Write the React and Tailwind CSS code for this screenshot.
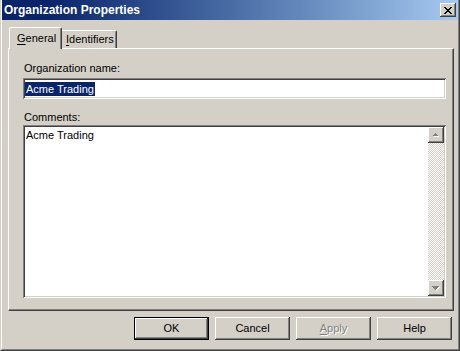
import React from 'react';

// raised 3D bevel used by buttons, tabs panel and scroll buttons
const raised = 'shadow-[inset_-1px_-1px_#404040,inset_1px_1px_#ffffff,inset_-2px_-2px_#808080,inset_2px_2px_#d4d0c8]';
const sunken = 'shadow-[inset_1px_1px_#808080,inset_-1px_-1px_#ffffff,inset_2px_2px_#404040,inset_-2px_-2px_#d4d0c8]';

const CloseGlyph = () => {
  const rows = ['11000011', '01100110', '00111100', '00011000', '00111100', '01100110', '11000011'];
  return (
    <svg width="8" height="7" viewBox="0 0 8 7" shapeRendering="crispEdges">
      {rows.map((r, y) =>
        r.split('').map((c, x) => (c === '1' ? <rect key={`${x}-${y}`} x={x} y={y} width="1" height="1" fill="#000" /> : null))
      )}
    </svg>
  );
};

const Arrow = ({ up }) => (
  <svg width="8" height="5" viewBox="0 0 8 5" shapeRendering="crispEdges">
    {up ? (
      <>
        <path d="M4 1h1v1h1v1h1v1H2V3h1V2h1z" fill="#ffffff" />
        <path d="M3 0h1v1h1v1h1v1H1V2h1V1h1z" fill="#808080" />
      </>
    ) : (
      <>
        <path d="M1 1h7v1H7v1H6v1H5v1H4V4H3V3H2V2H1z" fill="#ffffff" />
        <path d="M0 0h7v1H6v1H5v1H4v1H3V3H2V2H1V1H0z" fill="#808080" />
      </>
    )}
  </svg>
);

const Btn = ({ children, isDefault, disabled }) => (
  <button
    className={`w-[75px] h-[23px] bg-[#d4d0c8] flex items-center justify-center ${
      isDefault
        ? 'border border-black shadow-[inset_-1px_-1px_#404040,inset_1px_1px_#ffffff,inset_-2px_-2px_#808080]'
        : raised
    } ${disabled ? 'text-[#808080] [text-shadow:1px_1px_0_#ffffff]' : 'text-black'}`}
  >
    {children}
  </button>
);

export default function App() {
  return (
    <div className="w-[460px] h-[351px] bg-[#d4d0c8] font-['Liberation_Sans',Arial,sans-serif] text-[11px] leading-[13px] text-black border-l border-l-[#d4d0c8] border-r border-b border-r-[#404040] border-b-[#404040] overflow-hidden select-none">
      <div className="h-full flex flex-col border-l border-l-white border-r border-b border-r-[#808080] border-b-[#808080]">
        {/* Title bar */}
        <div className="h-[20px] shrink-0 flex items-center justify-between bg-gradient-to-r from-[#0a246a] from-10% to-[#a6caf0] pl-[2px] pr-[2px]">
          <span className="text-white font-bold text-[12px]">Organization Properties</span>
          <div className={`w-[16px] h-[14px] bg-[#d4d0c8] flex items-center justify-center ${raised}`}>
            <CloseGlyph />
          </div>
        </div>

        {/* Tabs + panel */}
        <div className="ml-[6px] mt-[7px] w-[446px] flex flex-col">
          <div className="h-[21px] flex items-end relative z-10 pl-[1px]">
            <div className="w-[53px] h-[22px] -mb-px bg-[#d4d0c8] border-l border-t border-white border-r border-r-[#404040] shadow-[inset_-1px_0_#808080] rounded-tl-[2px] rounded-tr-[2px] pl-[7px] pt-[4px]">
              <span className="underline underline-offset-2">G</span>eneral
            </div>
            <div className="w-[55px] h-[18px] bg-[#d4d0c8] border-t border-t-white border-r border-r-[#404040] shadow-[inset_-1px_0_#808080] rounded-tr-[2px] pl-[4px] pt-[2px]">
              <span className="underline underline-offset-2">I</span>dentifiers
            </div>
          </div>
          <div className="h-[263px] bg-[#d4d0c8] border-l border-t border-white border-r border-b border-r-[#404040] border-b-[#404040] shadow-[inset_-1px_-1px_#808080] pl-[14px] pt-[13px]">
            <div className="pl-[1px] h-[13px]">Organization name:</div>
            <div className={`mt-[3px] w-[423px] h-[21px] bg-white ${sunken} flex items-center pl-[2px]`}>
              <span className="bg-[#0a246a] text-white h-[14px] leading-[14px] px-[1px]">Acme Trading</span>
            </div>
            <div className="mt-[12px] pl-[1px] h-[13px]">Comments:</div>
            <div className={`mt-[1px] w-[423px] h-[173px] bg-white ${sunken} flex p-[2px]`}>
              <div className="flex-1 pl-[1px] pt-[2px]">Acme Trading</div>
              <div className="w-[16px] flex flex-col bg-[repeating-conic-gradient(#ffffff_0_25%,#d4d0c8_0_50%)] bg-[length:2px_2px]">
                <div className={`h-[16px] bg-[#d4d0c8] flex items-center justify-center ${raised}`}>
                  <Arrow up />
                </div>
                <div className="flex-1" />
                <div className={`h-[16px] bg-[#d4d0c8] flex items-center justify-center ${raised}`}>
                  <Arrow />
                </div>
              </div>
            </div>
          </div>
        </div>

        {/* Buttons */}
        <div className="mt-[6px] flex justify-end gap-[6px] pr-[6px]">
          <Btn isDefault>OK</Btn>
          <Btn>Cancel</Btn>
          <Btn disabled>
            <span><span className="underline underline-offset-2">A</span>pply</span>
          </Btn>
          <Btn>Help</Btn>
        </div>
      </div>
    </div>
  );
}
